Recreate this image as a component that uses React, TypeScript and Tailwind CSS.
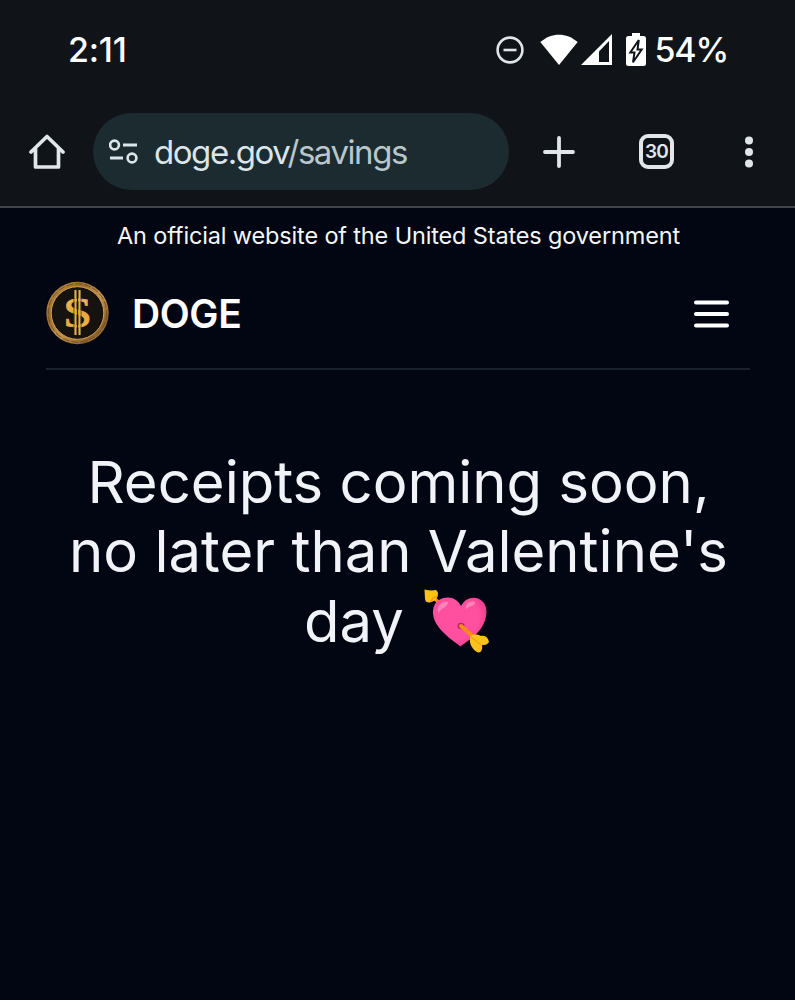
import type { ReactNode } from "react";

type IconProps = {
  width: number;
  height: number;
  className?: string;
  children: ReactNode;
};

function Icon({ width, height, className, children }: IconProps) {
  return (
    <svg
      width={width}
      height={height}
      viewBox={`0 0 ${width} ${height}`}
      fill="none"
      className={`shrink-0 ${className ?? ""}`}
    >
      {children}
    </svg>
  );
}

function StatusBar() {
  return (
    <div className="flex h-[100px] items-center pl-[68px] text-white">
      <span className="w-[428px] text-[34px] leading-none font-medium tracking-[-0.2px]">2:11</span>
      <Icon width={28} height={28}>
        <circle cx="14" cy="14" r="12.4" stroke="#dfe5e8" strokeWidth="2.6" />
        <path d="M7.5 14h13" stroke="#dfe5e8" strokeWidth="2.6" />
      </Icon>
      <Icon width={38} height={32} className="ml-[15.5px]">
        <path d="M0.3 8C11.5-1.8 26.5-1.8 37.7 8L19 31Z" fill="#fff" />
      </Icon>
      <Icon width={31} height={32} className="ml-[3px]">
        <path fillRule="evenodd" d="M0 31L31 0V31ZM18 28H28V7L18 17.5Z" fill="#fff" />
      </Icon>
      <Icon width={20} height={34} className="ml-[14px]">
        <path d="M6 0H14V3H17.5Q20 3 20 5.5V30.5Q20 33 17.5 33H2.5Q0 33 0 30.5V5.5Q0 3 2.5 3H6Z" fill="#fff" />
        <path d="M12.8 7L4.3 19.5H8.5L7 29.3L15.7 16.5H11.5Z" fill="#fff" stroke="#101418" strokeWidth="2" />
      </Icon>
      <span className="ml-[9px] text-[34px] leading-none font-medium tracking-[-1.2px]">54%</span>
    </div>
  );
}

function BrowserBar() {
  return (
    <div className="flex h-[108px] items-start border-b-2 border-[#42464c] pt-[13px]">
      <div className="flex h-[77px] w-full items-center pl-[29px]">
        <Icon width={36} height={36}>
          <path
            d="M2 18L18 2.5L34 18M6.5 14V33H29.5V14"
            stroke="#e0e6ea"
            strokeWidth="3.7"
            strokeLinecap="round"
            strokeLinejoin="round"
          />
        </Icon>
        <div className="ml-[28px] flex h-[77px] w-[416px] shrink-0 items-center rounded-full bg-[#1c2b2f] pl-[16px]">
          <Icon width={30} height={26}>
            <circle cx="5.5" cy="6" r="4.4" stroke="#dce5e9" strokeWidth="2.6" />
            <path d="M14 6H28M1 19H14" stroke="#dce5e9" strokeWidth="2.8" />
            <circle cx="23" cy="19" r="4.4" stroke="#dce5e9" strokeWidth="2.6" />
          </Icon>
          <span className="ml-[15px] pt-[2px] text-[33px] leading-none font-normal tracking-[-1.45px] text-[#dce5e9]">
            doge.gov<span className="text-[#b9c7cc]">/savings</span>
          </span>
        </div>
        <Icon width={32} height={32} className="ml-[34px]">
          <path d="M16 2V30M2 16H30" stroke="#e0e6ea" strokeWidth="3.8" strokeLinecap="round" />
        </Icon>
        <div className="ml-[64px] flex size-[35px] shrink-0 items-center justify-center rounded-[9px] border-4 border-[#e0e6ea] text-[19px] leading-none font-semibold tracking-[-0.8px] text-[#e0e6ea]">
          30
        </div>
        <Icon width={10} height={32} className="ml-[70px]">
          <circle cx="5" cy="4.5" r="4" fill="#e0e6ea" />
          <circle cx="5" cy="16" r="4" fill="#e0e6ea" />
          <circle cx="5" cy="27.5" r="4" fill="#e0e6ea" />
        </Icon>
      </div>
    </div>
  );
}

function Coin() {
  return (
    <Icon width={63} height={64}>
      <defs>
        <linearGradient id="rim" x1="0" y1="0" x2="1" y2="1">
          <stop offset="0" stopColor="#c99a4c" />
          <stop offset="0.3" stopColor="#9a6d30" />
          <stop offset="0.55" stopColor="#c49450" />
          <stop offset="0.8" stopColor="#8a602a" />
          <stop offset="1" stopColor="#d3a557" />
        </linearGradient>
        <linearGradient id="gold" x1="0" y1="0" x2="0" y2="1">
          <stop offset="0" stopColor="#f2cb7c" />
          <stop offset="0.5" stopColor="#e6a83a" />
          <stop offset="1" stopColor="#f0bd4f" />
        </linearGradient>
      </defs>
      <circle cx="31.5" cy="32" r="31.2" fill="url(#rim)" />
      <circle cx="31.5" cy="32" r="29.2" stroke="#6b4a20" strokeWidth="0.9" strokeDasharray="7 2" />
      <circle cx="31.5" cy="32" r="26.3" fill="#15120f" stroke="#d0a055" strokeWidth="1" />
      <path d="M29.5 9V54M33.5 9V54" stroke="#e3ae4b" strokeWidth="2.2" />
      <text
        transform="translate(31.5 46) scale(1.22 1)"
        textAnchor="middle"
        fontFamily="'Liberation Serif', serif"
        fontSize="43"
        fill="url(#gold)"
        stroke="#e6ad46"
        strokeWidth="0.8"
      >
        S
      </text>
      <path d="M31.5 9V54" stroke="#15120f" strokeWidth="1.1" />
      <path d="M27.9 17V47M35.1 17V47" stroke="#4a3212" strokeWidth="0.7" />
    </Icon>
  );
}

function HeartWithArrow() {
  return (
    <Icon width={68} height={66} className="inline-block">
      <defs>
        <radialGradient id="heart" cx="0.4" cy="0.4" r="0.65">
          <stop offset="0.7" stopColor="#ff4f9f" />
          <stop offset="1" stopColor="#ee3c8b" />
        </radialGradient>
      </defs>
      <path d="M12 11L22 20" stroke="#f78b15" strokeWidth="3.5" />
      <path d="M1.5 1.5Q8 3 13 2Q16 4 14.5 8.5Q13 13 7 14.5Q2.5 15 2 11Z" fill="#fcc21b" />
      <path d="M7.5 14L10 10L14.5 8" stroke="#e99b10" strokeWidth="1.2" />
      <path
        d="M38 18C43 8 55 7 61 15C66 22 63 35 56 43C50 50 43 54 37.5 58.5C29 52 19 45 13.5 36C8 27 9 16 16 12C25 7 34 10 38 18Z"
        fill="url(#heart)"
      />
      <path d="M15 25C14 17 19 13 25 14C26 18 18 20 15 25Z" fill="#ff83b9" />
      <path d="M43 21C42 16 47 12 52 14C53 18 46 18 43 21Z" fill="#ff83b9" />
      <ellipse cx="38" cy="38" rx="3.5" ry="3.2" fill="#b52a62" />
      <path d="M38 38L54 52" stroke="#f78b15" strokeWidth="4" strokeLinecap="round" />
      <path
        d="M47 49C50 45 54 46 58 48C62 47 65 49 66 54C64 57 62 57 59 57C60 61 58 65 55 64.5C50 62 46 57 47 49Z"
        fill="#fcc21b"
      />
      <path d="M48 49L58 57" stroke="#f5a313" strokeWidth="1.5" />
    </Icon>
  );
}

function SiteHeader() {
  return (
    <header className="mr-[45px] ml-[46px] flex h-[112px] items-center border-b-2 border-[#18212c] pr-[21px]">
      <Coin />
      <span className="ml-[23px] text-[39px] leading-none font-semibold tracking-[-0.4px] text-white">DOGE</span>
      <Icon width={35} height={30} className="ml-auto">
        <path d="M2 4.5H33M2 16H33M2 27.5H33" stroke="#fff" strokeWidth="4" strokeLinecap="round" />
      </Icon>
    </header>
  );
}

export default function App() {
  return (
    <div className="h-[1000px] w-[795px] overflow-hidden bg-[#020612] font-['Inter',sans-serif]">
      <div className="bg-[#101418]">
        <StatusBar />
        <BrowserBar />
      </div>
      <p className="flex h-[50px] items-center justify-center pt-[6px] pl-[2px] text-[23.5px] tracking-[-0.15px] whitespace-nowrap text-[#f5f6f8]">
        An official website of the United States government
      </p>
      <SiteHeader />
      <main className="pt-[77px] pl-[2px] text-center text-[58px] leading-[70px] whitespace-nowrap text-[#f1f3f8]">
        <div>Receipts coming soon,</div>
        <div className="-mt-px">no later than Valentine's</div>
        <div className="flex items-center justify-center gap-[19px] pr-[2px]">
          day
          <HeartWithArrow />
        </div>
      </main>
    </div>
  );
}
